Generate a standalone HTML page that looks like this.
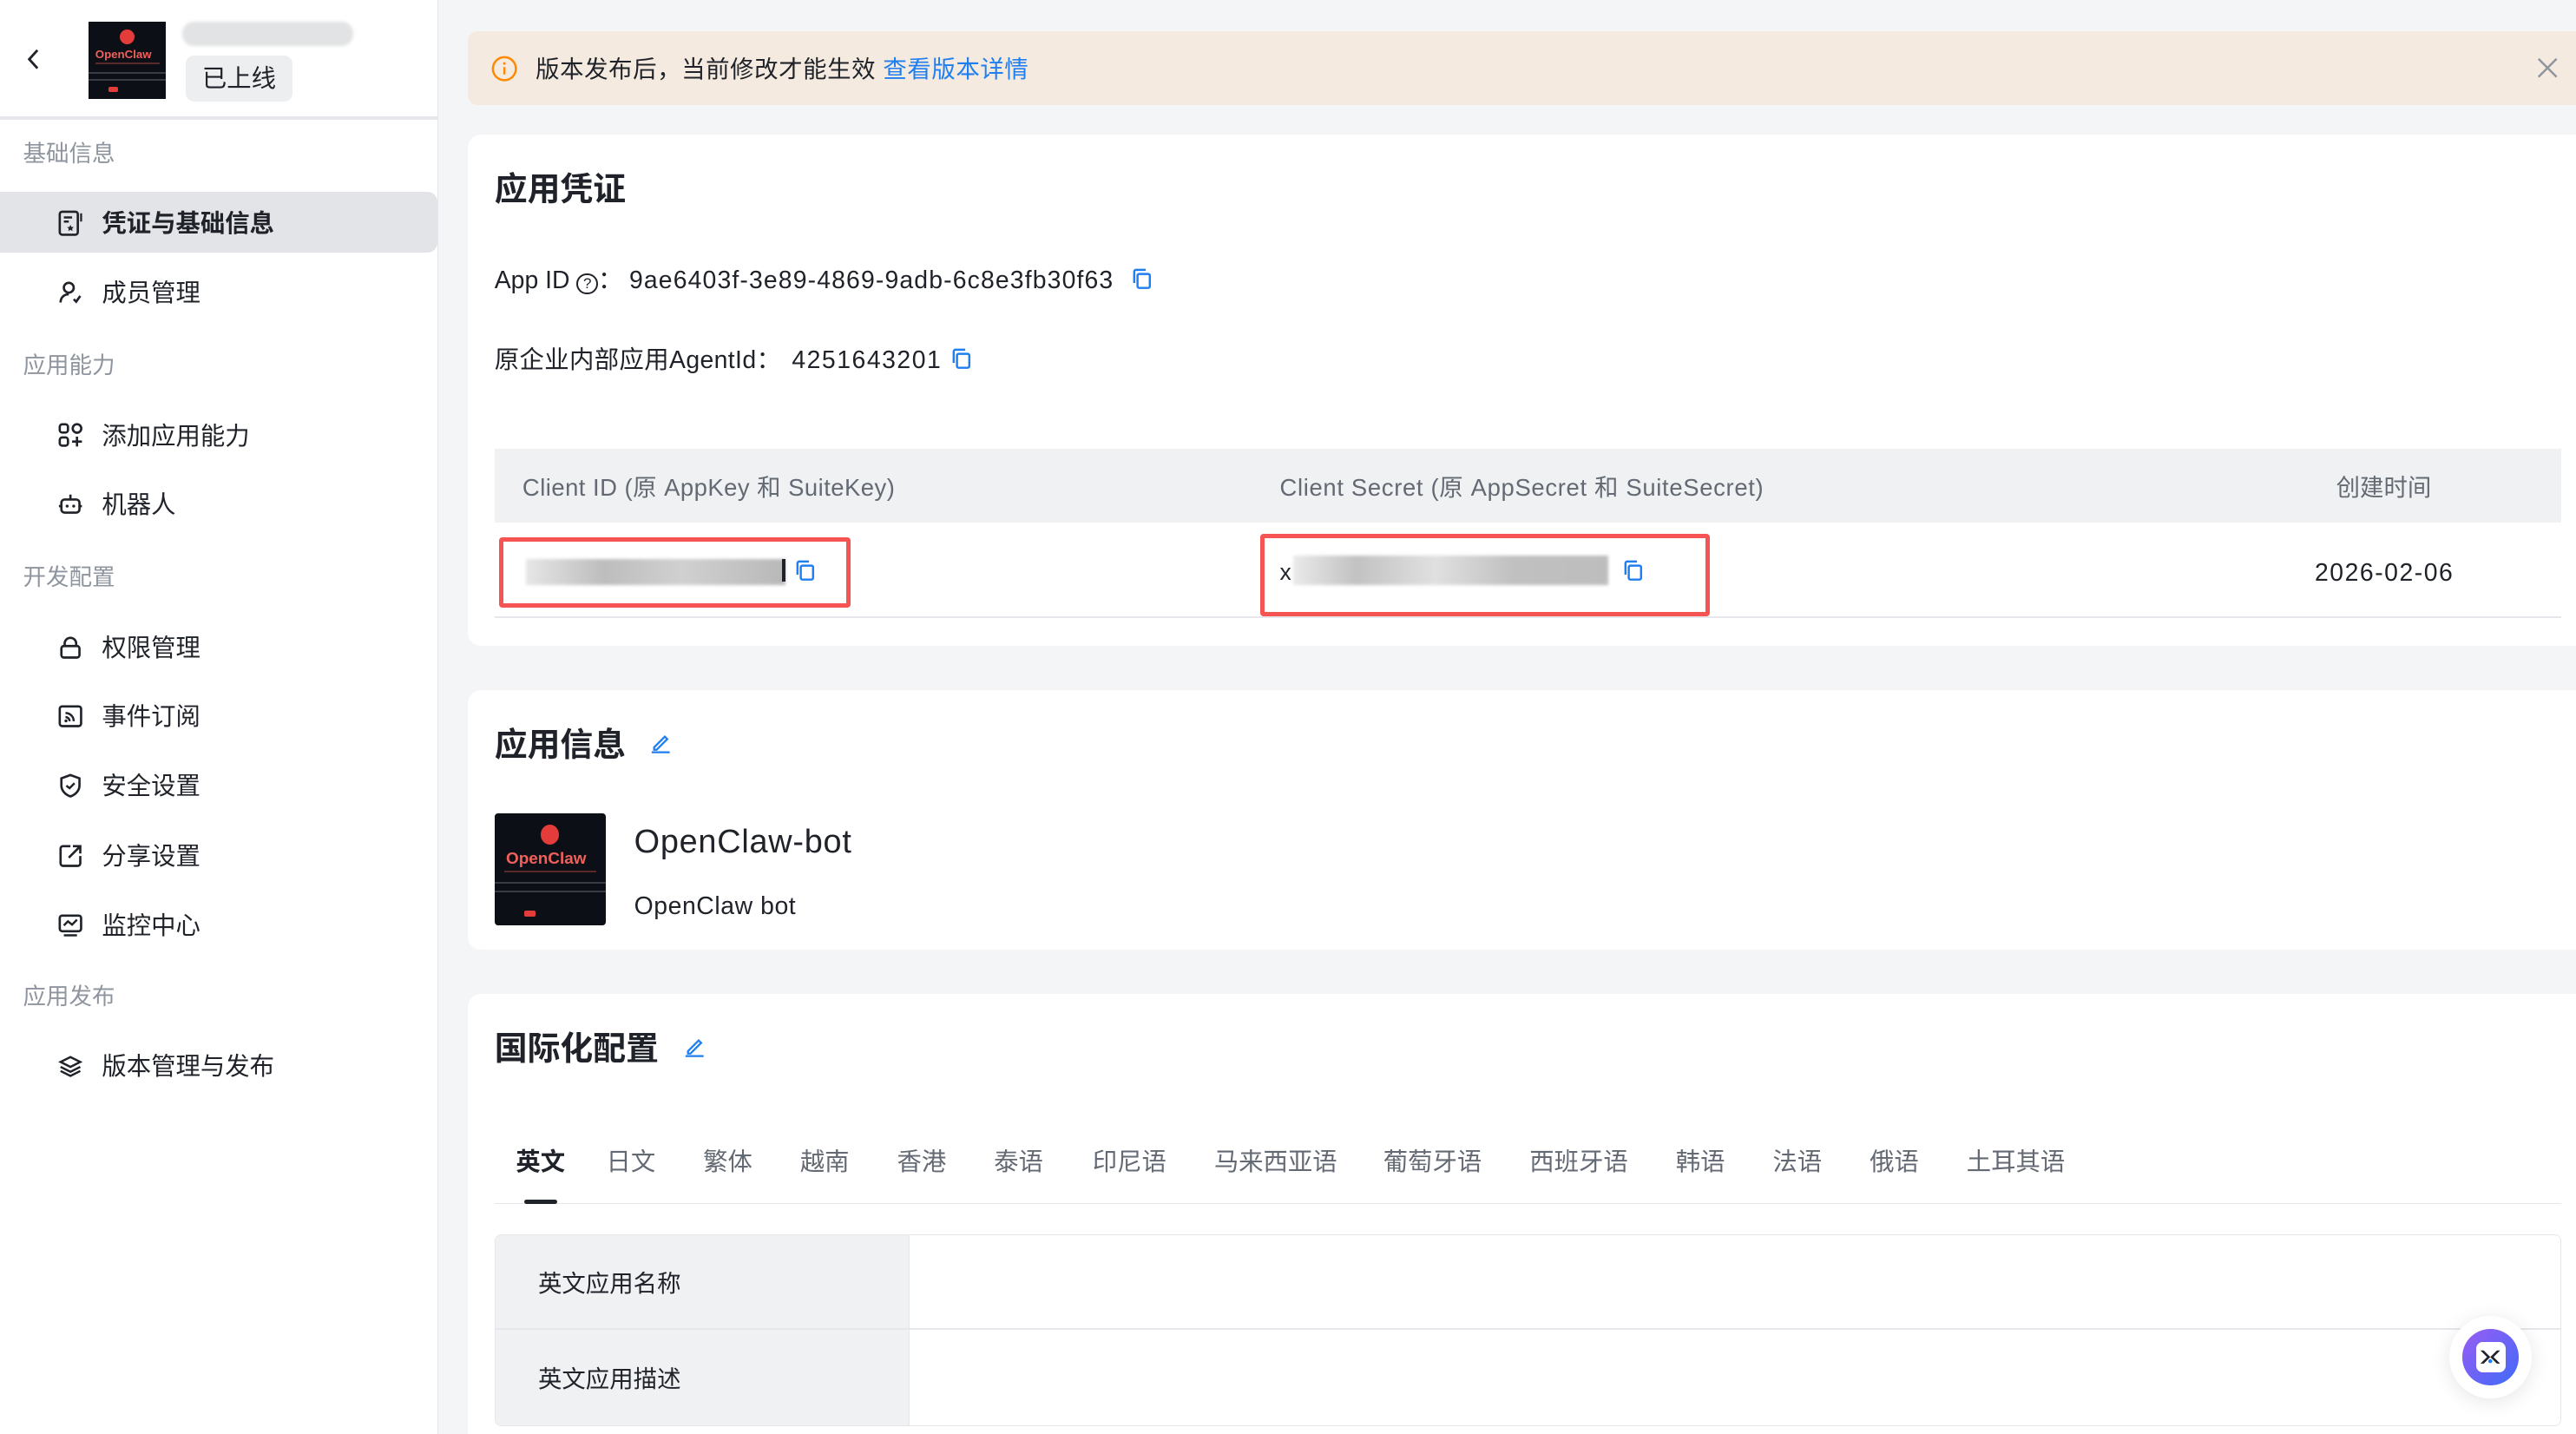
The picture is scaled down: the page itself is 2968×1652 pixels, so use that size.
<!DOCTYPE html>
<html><head><meta charset="utf-8"><style>
*{margin:0;padding:0;box-sizing:border-box}
html,body{width:2968px;height:1652px;overflow:hidden;background:#f4f5f7}
.root{position:relative;width:1568px;height:873px;zoom:1.89286;font-family:"Liberation Sans","Noto Sans CJK SC",sans-serif;color:#1f2329;overflow:hidden}
.a{position:absolute;white-space:nowrap}
.side{position:absolute;left:0;top:0;width:267px;height:873px;background:#fff;border-right:1px solid #e4e5e7}
.sec{position:absolute;left:14px;font-size:14px;color:#8f959e;line-height:20px}
.it{position:absolute;left:62px;font-size:15px;line-height:20px;color:#1f2329}
.ic{position:absolute;left:35px;width:16px;height:16px}
.card{position:absolute;left:285px;width:1300px;background:#fff;border-radius:8px}
.h{position:absolute;left:16px;font-size:20px;font-weight:bold;line-height:26px}
.gray{color:#646a73}
.tab{position:absolute;top:698px;font-size:15px;color:#646a73;line-height:20px}
</style></head><body><div class="root">

<div class="side">
 <div style="position:absolute;left:0;top:71px;width:267px;height:2px;background:#e6e7ea"></div>
 <svg class="a" style="left:15px;top:29px" width="12" height="14" viewBox="0 0 12 14"><path d="M8 1.5L3 7l5 5.5" fill="none" stroke="#1f2329" stroke-width="1.5"/></svg>
 <div class="a" style="left:54px;top:13px;width:47px;height:47px;background:#0d0f17;overflow:hidden">
   <div class="a" style="left:19px;top:5px;width:9px;height:9px;border-radius:50%;background:#e43b3b"></div>
   <div class="a" style="left:4px;top:16px;font-size:7px;font-weight:bold;color:#f0605a">OpenClaw</div>
   <div class="a" style="left:4px;top:25px;width:39px;height:1px;background:#5a2a2a"></div>
   <div class="a" style="left:0px;top:31px;width:47px;height:1px;background:#3a3c44"></div>
   <div class="a" style="left:0px;top:35px;width:47px;height:1px;background:#3a3c44"></div>
   <div class="a" style="left:12px;top:40px;width:6px;height:3px;background:#e43b3b;border-radius:1px"></div>
 </div>
 <div class="a" style="left:111px;top:13px;width:104px;height:15px;background:#e2e3e4;border-radius:7px;filter:blur(1px)"></div>
 <div class="a" style="left:113px;top:34px;width:65px;height:28px;background:#eceef0;border-radius:5px;font-size:15px;line-height:29px;text-align:center">已上线</div>

 <div class="sec" style="top:84px">基础信息</div>
 <div class="a" style="left:0;top:117px;width:266px;height:37px;background:#e3e4e7;border-radius:0 6px 6px 0"></div>
 <svg class="ic" style="top:128px" viewBox="0 0 16 16"><rect x="1.5" y="1" width="11" height="14" rx="1.5" fill="none" stroke="#1f2329" stroke-width="1.4"/><path d="M4 4.5h5M4 7h3" stroke="#1f2329" stroke-width="1.3"/><path d="M8 9l.6 1.3 1.4.1-1 1 .3 1.4L8 12l-1.3.8.3-1.4-1-1 1.4-.1z" fill="#1f2329"/><path d="M14.5 2v5" stroke="#1f2329" stroke-width="1.2"/></svg>
 <div class="it" style="top:127px;font-weight:bold">凭证与基础信息</div>
 <svg class="ic" style="top:170px" viewBox="0 0 16 16"><circle cx="7" cy="5" r="3" fill="none" stroke="#1f2329" stroke-width="1.4"/><path d="M2 14c0-3 2-5 5-5M10 12l1.5 1.5L14 10" fill="none" stroke="#1f2329" stroke-width="1.4"/></svg>
 <div class="it" style="top:169px">成员管理</div>

 <div class="sec" style="top:213px">应用能力</div>
 <svg class="ic" style="top:257px" viewBox="0 0 16 16"><rect x="1.5" y="1.5" width="5" height="5" rx="1.5" fill="none" stroke="#1f2329" stroke-width="1.4"/><rect x="1.5" y="9.5" width="5" height="5" rx="1.5" fill="none" stroke="#1f2329" stroke-width="1.4"/><circle cx="12" cy="4" r="2.6" fill="none" stroke="#1f2329" stroke-width="1.4"/><path d="M12 9v6M9 12h6" stroke="#1f2329" stroke-width="1.4"/></svg>
 <div class="it" style="top:256px">添加应用能力</div>
 <svg class="ic" style="top:299px" viewBox="0 0 16 16"><rect x="2.5" y="5" width="11" height="8" rx="2" fill="none" stroke="#1f2329" stroke-width="1.4"/><path d="M8 2v3M1 9h1.5M13.5 9H15" stroke="#1f2329" stroke-width="1.4"/><circle cx="6" cy="9" r=".9" fill="#1f2329"/><circle cx="10" cy="9" r=".9" fill="#1f2329"/></svg>
 <div class="it" style="top:298px">机器人</div>

 <div class="sec" style="top:342px">开发配置</div>
 <svg class="ic" style="top:386px" viewBox="0 0 16 16"><path d="M4.5 7V5.5a3.5 3.5 0 017 0V7" fill="none" stroke="#1f2329" stroke-width="1.4"/><rect x="2.5" y="7" width="11" height="7" rx="1.5" fill="none" stroke="#1f2329" stroke-width="1.4"/></svg>
 <div class="it" style="top:385px">权限管理</div>
 <svg class="ic" style="top:428px" viewBox="0 0 16 16"><rect x="1.5" y="2" width="13" height="12" rx="1.5" fill="none" stroke="#1f2329" stroke-width="1.4"/><path d="M5 6a5 5 0 015 5M5 8.5a2.5 2.5 0 012.5 2.5" fill="none" stroke="#1f2329" stroke-width="1.3"/><circle cx="5.3" cy="10.8" r=".9" fill="#1f2329"/></svg>
 <div class="it" style="top:427px">事件订阅</div>
 <svg class="ic" style="top:470px" viewBox="0 0 16 16"><path d="M8 1.5l5.5 2v4.5c0 3-2.5 5.5-5.5 6.5-3-1-5.5-3.5-5.5-6.5V3.5z" fill="none" stroke="#1f2329" stroke-width="1.4"/><path d="M5.5 8l2 1.5 3-3" fill="none" stroke="#1f2329" stroke-width="1.3"/></svg>
 <div class="it" style="top:469px">安全设置</div>
 <svg class="ic" style="top:513px" viewBox="0 0 16 16"><path d="M8 2H3.5A1.5 1.5 0 002 3.5v9A1.5 1.5 0 003.5 14h9a1.5 1.5 0 001.5-1.5V8M7 9l7-7M9.5 2H14v4.5" fill="none" stroke="#1f2329" stroke-width="1.4"/></svg>
 <div class="it" style="top:512px">分享设置</div>
 <svg class="ic" style="top:555px" viewBox="0 0 16 16"><rect x="1.5" y="2" width="13" height="9.5" rx="1.5" fill="none" stroke="#1f2329" stroke-width="1.4"/><path d="M4 8l2.5-2.5 2.5 2 3-3M4 14h8" fill="none" stroke="#1f2329" stroke-width="1.3"/></svg>
 <div class="it" style="top:554px">监控中心</div>

 <div class="sec" style="top:597px">应用发布</div>
 <svg class="ic" style="top:641px" viewBox="0 0 16 16"><path d="M8 2.5l6 3-6 3-6-3z M2 8.5l6 3 6-3M2 11l6 3 6-3" fill="none" stroke="#1f2329" stroke-width="1.3"/></svg>
 <div class="it" style="top:640px">版本管理与发布</div>
</div>

<!-- banner -->
<div class="a" style="left:285px;top:19px;width:1300px;height:45px;background:#f4eadf;border-radius:6px"></div>
<svg class="a" style="left:299px;top:34px" width="16" height="16" viewBox="0 0 16 16"><circle cx="8" cy="8" r="7" fill="none" stroke="#ff8800" stroke-width="1.3"/><path d="M8 7v4.5" stroke="#ff8800" stroke-width="1.3"/><circle cx="8" cy="4.8" r=".8" fill="#ff8800"/></svg>
<div class="a" style="left:326px;top:32px;font-size:14.5px;line-height:20px;letter-spacing:0.3px">版本发布后，当前修改才能生效 <span style="color:#1f7ff0">查看版本详情</span></div>
<svg class="a" style="left:1543px;top:34px" width="15" height="15" viewBox="0 0 15 15"><path d="M2 2l11 11M13 2L2 13" stroke="#8f959e" stroke-width="1.3"/></svg>

<!-- card1 -->
<div class="card" style="top:82px;height:311px">
 <div class="h" style="top:21px">应用凭证</div>
 <div class="a" style="left:16px;top:79px;font-size:15px;line-height:20px">App ID <span style="display:inline-block;width:13px;height:13px;border:1.2px solid #1f2329;border-radius:50%;font-size:9px;line-height:11px;text-align:center;vertical-align:0px">?</span>：</div>
 <div class="a" style="left:98px;top:79px;font-size:15px;line-height:20px;letter-spacing:0.6px">9ae6403f-3e89-4869-9adb-6c8e3fb30f63</div>
 <div class="a" style="left:16px;top:128px;font-size:15px;line-height:20px;letter-spacing:0.2px">原企业内部应用AgentId：</div>
 <div class="a" style="left:197px;top:128px;font-size:15px;line-height:20px;letter-spacing:0.8px">4251643201</div>
 <div class="a" style="left:16px;top:191px;width:1258px;height:45px;background:#f0f1f3"></div>
 <div class="a gray" style="left:33px;top:205px;font-size:14.5px;line-height:20px;letter-spacing:0.25px">Client ID (原 AppKey 和 SuiteKey)</div>
 <div class="a gray" style="left:494px;top:205px;font-size:14.5px;line-height:20px;letter-spacing:0.35px">Client Secret (原 AppSecret 和 SuiteSecret)</div>
 <div class="a gray" style="left:1137px;top:205px;font-size:14.5px;line-height:20px">创建时间</div>
 <div class="a" style="left:16px;top:293px;width:1258px;height:1px;background:#e6e7ea"></div>
 <div class="a" style="left:19px;top:245px;width:214px;height:43px;border:3px solid #f65353;border-radius:2px"></div>
 <div class="a" style="left:35px;top:258px;width:158px;height:16px;background:linear-gradient(90deg,#e6e6e6,#bdbdbd 30%,#d0d0d0 60%,#b8b8b8);filter:blur(1px)"></div>
 <div class="a" style="left:482px;top:243px;width:274px;height:50px;border:3px solid #f65353;border-radius:2px"></div>
 <div class="a" style="left:494px;top:258px;font-size:14px">x</div>
 <div class="a" style="left:502px;top:256px;width:192px;height:18px;background:linear-gradient(90deg,#eaeaea,#c2c2c2 20%,#e0e0e0 45%,#c0c0c0 70%,#bdbdbd);filter:blur(1px)"></div>
 <div class="a" style="left:1124px;top:257px;font-size:15px;line-height:20px;letter-spacing:0.8px">2026-02-06</div>
</div>

<!-- card2 -->
<div class="card" style="top:420px;height:158px">
 <div class="h" style="top:21px">应用信息</div>
 <svg class="a" style="left:110px;top:25px" width="14" height="14" viewBox="0 0 14 14"><path d="M3 10l6.5-6.5 1.5 1.5L4.5 11.5H3z M1.5 13h11" fill="none" stroke="#1f7ff0" stroke-width="1.2"/></svg>
 <div class="a" style="left:16px;top:75px;width:68px;height:68px;background:#0d0f17;border-radius:2px;overflow:hidden">
   <div class="a" style="left:28px;top:7px;width:11px;height:12px;border-radius:50%;background:#e43b3b"></div>
   <div class="a" style="left:7px;top:22px;font-size:10px;font-weight:bold;color:#f0605a">OpenClaw</div>
   <div class="a" style="left:6px;top:35px;width:56px;height:1px;background:#5a2a2a"></div>
   <div class="a" style="left:0px;top:42px;width:68px;height:1px;background:#3a3c44"></div>
   <div class="a" style="left:0px;top:47px;width:68px;height:1px;background:#3a3c44"></div>
   <div class="a" style="left:18px;top:59px;width:7px;height:4px;background:#e43b3b;border-radius:1px"></div>
 </div>
 <div class="a" style="left:101px;top:80px;font-size:20px;line-height:26px;letter-spacing:0.4px">OpenClaw-bot</div>
 <div class="a" style="left:101px;top:122px;font-size:15px;line-height:20px;letter-spacing:0.3px">OpenClaw bot</div>
</div>

<!-- card3 -->
<div class="card" style="top:605px;height:300px">
 <div class="h" style="top:21px">国际化配置</div>
 <svg class="a" style="left:131px;top:25px" width="14" height="14" viewBox="0 0 14 14"><path d="M3 10l6.5-6.5 1.5 1.5L4.5 11.5H3z M1.5 13h11" fill="none" stroke="#1f7ff0" stroke-width="1.2"/></svg>
 <div class="a" style="left:16px;top:127px;width:1258px;height:1px;background:#e6e7ea"></div>
 <div class="a" style="left:34px;top:125px;width:20px;height:3px;background:#1f2329;border-radius:2px"></div>
 <div class="a" style="left:16px;top:146px;width:1258px;height:117px;border:1px solid #e6e7ea;border-radius:4px;overflow:hidden">
  <div class="a" style="left:0;top:0;width:252px;height:117px;background:#f0f1f3;border-right:1px solid #e6e7ea"></div>
  <div class="a" style="left:0;top:57px;width:1258px;height:1px;background:#e6e7ea"></div>
  <div class="a" style="left:26px;top:20px;font-size:14.5px;line-height:20px">英文应用名称</div>
  <div class="a" style="left:26px;top:78px;font-size:14.5px;line-height:20px">英文应用描述</div>
 </div>
</div>
<div class="tab" style="left:314px;color:#1f2329;font-weight:bold">英文</div>
<div class="tab" style="left:369px">日文</div>
<div class="tab" style="left:428px">繁体</div>
<div class="tab" style="left:487px">越南</div>
<div class="tab" style="left:546px">香港</div>
<div class="tab" style="left:605px">泰语</div>
<div class="tab" style="left:665px">印尼语</div>
<div class="tab" style="left:739px">马来西亚语</div>
<div class="tab" style="left:842px">葡萄牙语</div>
<div class="tab" style="left:931px">西班牙语</div>
<div class="tab" style="left:1020px">韩语</div>
<div class="tab" style="left:1079px">法语</div>
<div class="tab" style="left:1138px">俄语</div>
<div class="tab" style="left:1197px">土耳其语</div>

<!-- copy icons -->
<svg class="a" style="left:689px;top:163px" width="13" height="13" viewBox="0 0 13 13"><rect x="3.5" y="3.5" width="7.5" height="8.5" rx="1" fill="none" stroke="#1f7ff0" stroke-width="1.3"/><path d="M1.5 9V2a1 1 0 011-1h6" fill="none" stroke="#1f7ff0" stroke-width="1.3"/></svg>
<svg class="a" style="left:579px;top:212px" width="13" height="13" viewBox="0 0 13 13"><rect x="3.5" y="3.5" width="7.5" height="8.5" rx="1" fill="none" stroke="#1f7ff0" stroke-width="1.3"/><path d="M1.5 9V2a1 1 0 011-1h6" fill="none" stroke="#1f7ff0" stroke-width="1.3"/></svg>
<div class="a" style="left:476px;top:340px;width:2px;height:14px;background:#1f2329"></div>
<svg class="a" style="left:484px;top:341px" width="13" height="13" viewBox="0 0 13 13"><rect x="3.5" y="3.5" width="7.5" height="8.5" rx="1" fill="none" stroke="#1f7ff0" stroke-width="1.3"/><path d="M1.5 9V2a1 1 0 011-1h6" fill="none" stroke="#1f7ff0" stroke-width="1.3"/></svg>
<svg class="a" style="left:988px;top:341px" width="13" height="13" viewBox="0 0 13 13"><rect x="3.5" y="3.5" width="7.5" height="8.5" rx="1" fill="none" stroke="#1f7ff0" stroke-width="1.3"/><path d="M1.5 9V2a1 1 0 011-1h6" fill="none" stroke="#1f7ff0" stroke-width="1.3"/></svg>

<!-- floating button -->
<div class="a" style="left:1491px;top:801px;width:50px;height:50px;border-radius:50%;background:#fff;box-shadow:0 2px 12px rgba(0,0,0,.1)"></div>
<div class="a" style="left:1499px;top:809px;width:34px;height:34px;border-radius:50%;background:linear-gradient(135deg,#9a5cf5,#3f6bf6)"></div>
<div class="a" style="left:1507px;top:817px;width:18px;height:18px;border-radius:4px;background:#fff"></div>
<svg class="a" style="left:1509px;top:820px" width="14" height="12" viewBox="0 0 14 12"><path d="M1 2l4 4-4 4h2l4-4-4-4zM13 2l-4 4 4 4h-2l-4-4 4-4z" fill="#1f2329"/><circle cx="7" cy="8.5" r="1.2" fill="#1f7ff0"/></svg>
</div></body></html>
